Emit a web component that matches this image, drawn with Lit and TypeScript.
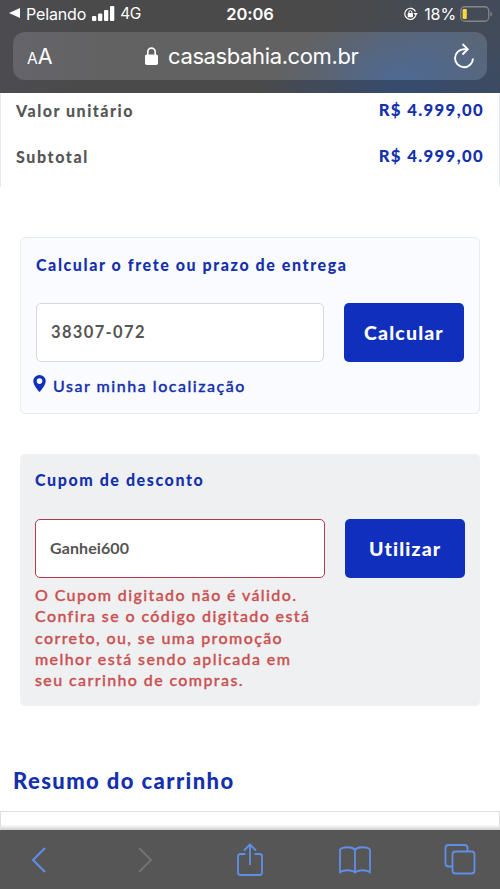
import { LitElement, html, css, svg } from "lit";
import { customElement } from "lit/decorators.js";

const backIcon = svg`<svg width="16" height="26" viewBox="0 0 16 26"><path d="M14 1 2 13l12 12" fill="none" stroke="#5f8fe6" stroke-width="2"/></svg>`;
const forwardIcon = svg`<svg width="16" height="26" viewBox="0 0 16 26"><path d="M2 1 14 13 2 25" fill="none" stroke="#737373" stroke-width="2"/></svg>`;
const shareIcon = svg`<svg width="28" height="34" viewBox="0 0 28 34" fill="none" stroke="#5f8fe6" stroke-width="1.8" stroke-linejoin="round"><path d="M9.5 11H4.5Q2 11 2 13.500V29.500Q2 32 4.500 32H23.500Q26 32 26 29.500V13.500Q26 11 23.500 11H18.500M14 22V1.500M8 7.500 14 1.500 20 7.500"/></svg>`;
const bookIcon = svg`<svg width="32" height="28" viewBox="0 0 32 28" fill="none" stroke="#5f8fe6" stroke-width="1.800" stroke-linejoin="round"><path d="M16 4C13.500 .5 4 .3 1 3.500V26.500C4 23.500 13 23.500 16 26.500C19 23.500 28 23.500 31 26.500V3.500C28 .3 18.500 .5 16 4V26.500"/></svg>`;
const tabsIcon = svg`<svg width="32" height="31" viewBox="0 0 32 31" fill="none" stroke="#5f8fe6" stroke-width="1.800"><path d="M8.500 22.500H4.500Q1.500 22.500 1.500 19.500V4Q1.500 1 4.500 1H20.500Q23.500 1 23.500 4V7.500"/><rect x="8.500" y="7.500" width="22" height="22" rx="3"/></svg>`;

@customElement("status-bar")
class StatusBar extends LitElement {
  static styles = css`
    :host { display: grid; grid-template-columns: 1fr auto 1fr; align-items: center; height: 28px; padding: 0 8px 0 9px; color: #fff; font: 16px/28px Inter, sans-serif; }
    .left, .right { display: flex; align-items: center; }
    .right { justify-content: flex-end; }
    .left svg { position: relative; top: -1px; }
    .app { margin: 0 6px 0 6px; letter-spacing: -0.15px; }
    .net { margin-left: 5px; font-size: 15.500px; letter-spacing: -0.3px; }
    .time { font-weight: 600; font-size: 16.500px; letter-spacing: -0.1px; margin-right: 1px; }
    .pct { margin: 0 4px 0 6px; font-size: 16px; letter-spacing: -0.1px; }
  `;
  render() {
    return html`
      <div class="left">
        <svg width="11" height="10" viewBox="0 0 11 10"><path d="M0 5 11 0V10Z" fill="#fff"/></svg>
        <span class="app">Pelando</span>
        <svg width="23" height="15" viewBox="0 0 23 15" fill="#fff"><rect y="10" width="4.300" height="5" rx="1"/><rect x="6" y="7.500" width="4.300" height="7.500" rx="1"/><rect x="12" y="4" width="4.300" height="11" rx="1"/><rect x="18" width="4.300" height="15" rx="1"/></svg>
        <span class="net">4G</span>
      </div>
      <span class="time">20:06</span>
      <div class="right">
        <svg width="14" height="14" viewBox="0 0 15 14"><path d="M12.600 8.500A6 6 0 1 1 12.300 4.400" fill="none" stroke="#fff" stroke-width="1.300"/><path d="M10.300 6H14.800L12.600 9.200Z" fill="#fff"/><rect x="4" y="6" width="5.600" height="4.400" rx=".6" fill="#fff"/><path d="M5.200 6V5a1.600 1.600 0 0 1 3.200 0V6" fill="none" stroke="#fff"/></svg>
        <span class="pct">18%</span>
        <svg width="32" height="16" viewBox="0 0 32 16"><rect x=".75" y=".75" width="28" height="14.500" rx="4" fill="none" stroke="#858585" stroke-width="1.300"/><rect x="2.600" y="3" width="4.200" height="10" rx="1.200" fill="#fbd937"/><path d="M30.300 5.500Q32 6 32 8T30.300 10.500Z" fill="#858585"/></svg>
      </div>`;
  }
}

@customElement("address-bar")
class AddressBar extends LitElement {
  static styles = css`
    :host { display: flex; align-items: center; box-sizing: border-box; height: 48px; margin: 4px 13px 0; padding: 0 12px 0 14px; border-radius: 12px; color: #fff; font-family: Inter, sans-serif; font-weight: 400;
      background: radial-gradient(ellipse 120px 60px at 385px 44px, rgba(72,108,164,.65), rgba(72,108,164,0)), linear-gradient(90deg, #65646a 0, #626262 22%, #626262 67%, #596577 88%, #5b6675 100%); }
    .aa { display: flex; align-items: baseline; width: 118px; font-size: 21.500px; line-height: 26px; margin-top: 2px; }
    .small { font-size: 15.500px; }
    .url { flex: 1; margin-left: 10px; font-size: 22px; line-height: 28px; letter-spacing: -0.38px; }
  `;
  render() {
    return html`
      <span class="aa"><span class="small">A</span><span>A</span></span>
      <svg width="13" height="18" viewBox="0 0 13 18"><rect y="7.500" width="13" height="10.500" rx="1.800" fill="#fff"/><path d="M2.800 8.500V4.800a3.700 3.700 0 0 1 7.400 0V8.500" fill="none" stroke="#fff" stroke-width="1.600"/></svg>
      <span class="url">casasbahia.com.br</span>
      <svg width="22" height="26" viewBox="0 0 22 26" fill="none" stroke="#fff" stroke-width="1.900"><path d="M14.500 6.200H11A9 9 0 1 0 20 15.500"/><path d="M9.500 1 14.700 6.200 9.500 11.500"/></svg>`;
  }
}

@customElement("app-root")
class AppRoot extends LitElement {
  static styles = css`
    :host { display: flex; flex-direction: column; box-sizing: border-box; width: 500px; height: 889px; overflow: hidden; background: #fff; color: #555; font: 700 16px/22px Lato, "Open Sans", sans-serif; white-space: nowrap; }
    .chrome { flex: none; height: 93px; background: radial-gradient(ellipse 150px 70px at 405px 93px, #344b70, rgba(52,75,112,0)), linear-gradient(90deg, #4c4b50 0, #4a4a4a 20%, #4a4a4a 65%, #424b5a 100%); }
    .totals { flex: none; box-sizing: border-box; height: 94px; border: solid #e6e8ec; border-width: 0 1px; padding: 6px 15px 0; }
    .row { display: flex; justify-content: space-between; height: 46px; }
    .label { padding-top: 1px; font-weight: 900; }
    .unit { letter-spacing: 1.500px; }
    .subtotal { letter-spacing: 1.600px; }
    .blue { color: #1530ac; }
    .price { letter-spacing: 1.350px; font-size: 16.700px; font-weight: 900; }
    .panel { flex: none; box-sizing: border-box; margin: 0 20px; border-radius: 5px; }
    .shipping { height: 177px; margin-top: 50px; padding: 16px 15px 0; border: 1px solid #e4ebf3; background: #f9fbff; }
    .coupon { height: 252px; margin-top: 40px; padding: 15px 15px 0; background: #eef0f2; }
    .heading { letter-spacing: 1.580px; font-weight: 900; }
    .form { display: flex; gap: 20px; height: 59px; margin-top: 27px; }
    .coupon .form { margin-top: 28px; }
    .field { box-sizing: border-box; width: 288px; padding: 0 14px; border: 1px solid #d5d7dc; border-radius: 5px; background: #fff; line-height: 56px; font-size: 16.500px; letter-spacing: 1.350px; }
    .invalid { width: 291px; border-color: #b23c48; font-size: 16px; letter-spacing: .1px; }
    .button { width: 120px; border-radius: 5px; background: #112fbd; color: #fff; text-align: center; font-size: 19.500px; font-weight: 900; line-height: 59px; letter-spacing: 1.150px; }
    .locate { display: flex; align-items: center; margin: 13px 0 0 -3px; font-weight: 500; }
    .pin { margin: -5px 7px 0 0; }
    .locate-text { letter-spacing: 1.530px; -webkit-text-stroke: .35px; }
    .error { margin-top: 6px; color: #cb5050; font-weight: 500; line-height: 21.250px; -webkit-text-stroke: .35px; }
    .line { display: block; letter-spacing: 1.390px; }
    .summary { margin: 60px 0 0 13px; font-size: 22px; line-height: 30px; font-weight: 900; letter-spacing: 1.400px; }
    .next { box-sizing: border-box; flex: 1; margin-top: 15px; border: solid #e0e0e0; border-width: 1px 1px 0; background: linear-gradient(#fff 9px, #fdfdfd 13px, #d0d0d0 18px); }
    .toolbar { flex: none; box-sizing: border-box; display: flex; align-items: center; justify-content: space-between; height: 59px; padding: 0 24px 0 23px; background: #565656; }
    .item { display: flex; justify-content: center; width: 32px; }
    .forward { margin: 0 -1px 0 1px; }
  `;
  render() {
    return html`
      <header class="chrome"><status-bar></status-bar><address-bar></address-bar></header>
      <section class="totals">
        <div class="row"><span class="label unit">Valor unitário</span><span class="blue price">R$ 4.999,00</span></div>
        <div class="row"><span class="label subtotal">Subtotal</span><span class="blue price">R$ 4.999,00</span></div>
      </section>
      <section class="panel shipping">
        <div class="blue heading">Calcular o frete ou prazo de entrega</div>
        <div class="form"><div class="field">38307-072</div><div class="button">Calcular</div></div>
        <div class="blue locate">
          <svg class="pin" width="13" height="17" viewBox="0 0 13 17"><path fill-rule="evenodd" d="M6.500 0A6.200 6.200 0 0 0 .3 6.200C.3 10.600 6.500 17 6.500 17S12.700 10.600 12.700 6.200A6.200 6.200 0 0 0 6.500 0ZM6.500 3.300A2.800 2.800 0 1 1 6.500 8.900A2.800 2.800 0 0 1 6.500 3.300Z" fill="#112fbd"/></svg>
          <span class="locate-text">Usar minha localização</span>
        </div>
      </section>
      <section class="panel coupon">
        <div class="blue heading">Cupom de desconto</div>
        <div class="form"><div class="field invalid">Ganhei600</div><div class="button">Utilizar</div></div>
        <div class="error">
          <span class="line">O Cupom digitado não é válido.</span>
          <span class="line">Confira se o código digitado está</span>
          <span class="line">correto, ou, se uma promoção</span>
          <span class="line">melhor está sendo aplicada em</span>
          <span class="line">seu carrinho de compras.</span>
        </div>
      </section>
      <div class="blue summary">Resumo do carrinho</div>
      <div class="next"></div>
      <nav class="toolbar">
        <span class="item">${backIcon}</span><span class="item forward">${forwardIcon}</span><span class="item">${shareIcon}</span><span class="item">${bookIcon}</span><span class="item">${tabsIcon}</span>
      </nav>`;
  }
}
